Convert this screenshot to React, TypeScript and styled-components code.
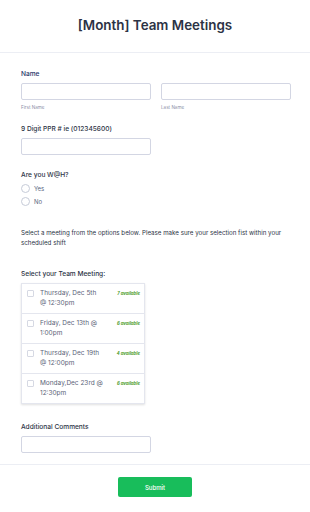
import React from "react";
import styled, { createGlobalStyle } from "styled-components";

const Global = createGlobalStyle`
  html, body { margin: 0; padding: 0; background: #fff; }
  body { font-family: Inter, "Noto Sans", sans-serif; color: #2c3345; }
  * { box-sizing: border-box; }
`;

const Page = styled.div`
  width: 310px;
  background: #fff;
`;

const Header = styled.header`
  height: 53px;
  display: flex;
  align-items: center;
  justify-content: center;
  border-bottom: 1px solid #eceef4;
`;

const Title = styled.h1`
  margin: 0 0 2px;
  font-size: 13.4px;
  font-weight: 600;
  color: #2c3345;
`;

const Form = styled.div`
  padding: 17px 19px 0 21px;
  display: flex;
  flex-direction: column;
`;

const Field = styled.div<{ $mb: number }>`
  display: flex;
  flex-direction: column;
  margin-bottom: ${(p) => p.$mb}px;
`;

const Label = styled.div<{ $blue?: boolean; $mb?: number }>`
  font-size: 6.6px;
  font-weight: 500;
  color: ${(p) => (p.$blue ? "#1f3468" : "#2c3345")};
  line-height: 9px;
  margin-bottom: ${(p) => (p.$mb ?? 4)}px;
`;

const Row = styled.div`
  display: flex;
  gap: 10px;
`;

const Col = styled.div`
  flex: 1;
  display: flex;
  flex-direction: column;
`;

const Input = styled.div<{ $w?: number }>`
  height: 17px;
  width: ${(p) => (p.$w ? `${p.$w}px` : "100%")};
  border: 1px solid #d3d6e3;
  border-radius: 2px;
  background: #fff;
`;

const SubLabel = styled.div`
  font-size: 4.6px;
  color: #8d8fa8;
  margin-top: 5px;
  line-height: 6px;
`;

const Radio = styled.div`
  display: flex;
  align-items: center;
  gap: 4px;
  height: 13px;
  font-size: 6px;
  color: #57647e;
`;

const Circle = styled.span`
  width: 9px;
  height: 9px;
  border-radius: 50%;
  border: 1px solid #c6cbd8;
  display: inline-block;
`;

const Para = styled.p`
  margin: 0;
  font-size: 6.2px;
  line-height: 9.5px;
  color: #2c3345;
`;

const Table = styled.div`
  width: 124px;
  border: 1px solid #e4e6ee;
  box-shadow: 0 1px 2px rgba(0, 0, 0, 0.12);
  display: flex;
  flex-direction: column;
`;

const Option = styled.div`
  height: 30px;
  flex: none;
  display: flex;
  align-items: flex-start;
  padding: 5px 4px 0 5px;
  border-bottom: 1px solid #e4e6ee;
  &:last-child { border-bottom: none; height: 29px; }
`;

const Check = styled.span`
  width: 7px;
  height: 7px;
  border: 1px solid #d6d9e3;
  border-radius: 1px;
  flex: none;
  margin: 1px 6px 0 0;
`;

const OptText = styled.div`
  flex: none;
  display: flex;
  flex-direction: column;
  font-size: 6.5px;
  line-height: 10px;
  color: #5c6478;
  margin-top: -1px;
  white-space: nowrap;
`;

const Avail = styled.span`
  margin-left: auto;
  font-size: 4.3px;
  font-weight: 700;
  font-style: italic;
  color: #4c9a2a;
  margin-top: 2px;
  white-space: nowrap;
`;

const Footer = styled.div`
  margin-top: 11px;
  border-top: 1px solid #eceef4;
  display: flex;
  justify-content: center;
  padding-top: 12px;
  height: 48px;
`;

const Submit = styled.button`
  width: 74px;
  height: 20px;
  background: #18bd5b;
  border: none;
  border-radius: 2px;
  color: #fff;
  font-family: Inter, sans-serif;
  font-size: 6px;
  font-weight: 500;
  padding: 0;
`;

const options = [
  { lines: ["Thursday, Dec 5th", "@ 12:30pm"], n: 7 },
  { lines: ["Friday, Dec 13th @", "1:00pm"], n: 6 },
  { lines: ["Thursday, Dec 19th", "@ 12:00pm"], n: 4 },
  { lines: ["Monday,Dec 23rd @", "12:30pm"], n: 6 },
];

export default function App() {
  return (
    <Page>
      <Global />
      <Header>
        <Title>[Month] Team Meetings</Title>
      </Header>
      <Form>
        <Field $mb={14}>
          <Label $blue>Name</Label>
          <Row>
            <Col>
              <Input />
              <SubLabel>First Name</SubLabel>
            </Col>
            <Col>
              <Input />
              <SubLabel>Last Name</SubLabel>
            </Col>
          </Row>
        </Field>
        <Field $mb={16}>
          <Label>9 Digit PPR # ie (012345600)</Label>
          <Input $w={130} />
        </Field>
        <Field $mb={20}>
          <Label $mb={2}>Are you W@H?</Label>
          <Radio>
            <Circle />
            Yes
          </Radio>
          <Radio>
            <Circle />
            No
          </Radio>
        </Field>
        <Field $mb={23}>
          <Para>
            Select a meeting from the options below. Please make sure your selection fist within your scheduled shift
          </Para>
        </Field>
        <Field $mb={19}>
          <Label>Select your Team Meeting:</Label>
          <Table>
            {options.map((o) => (
              <Option key={o.lines[0]}>
                <Check />
                <OptText>
                  {o.lines.map((l) => (
                    <span key={l}>{l}</span>
                  ))}
                </OptText>
                <Avail>{o.n} available</Avail>
              </Option>
            ))}
          </Table>
        </Field>
        <Field $mb={0}>
          <Label>Additional Comments</Label>
          <Input $w={130} />
        </Field>
      </Form>
      <Footer>
        <Submit>Submit</Submit>
      </Footer>
    </Page>
  );
}
